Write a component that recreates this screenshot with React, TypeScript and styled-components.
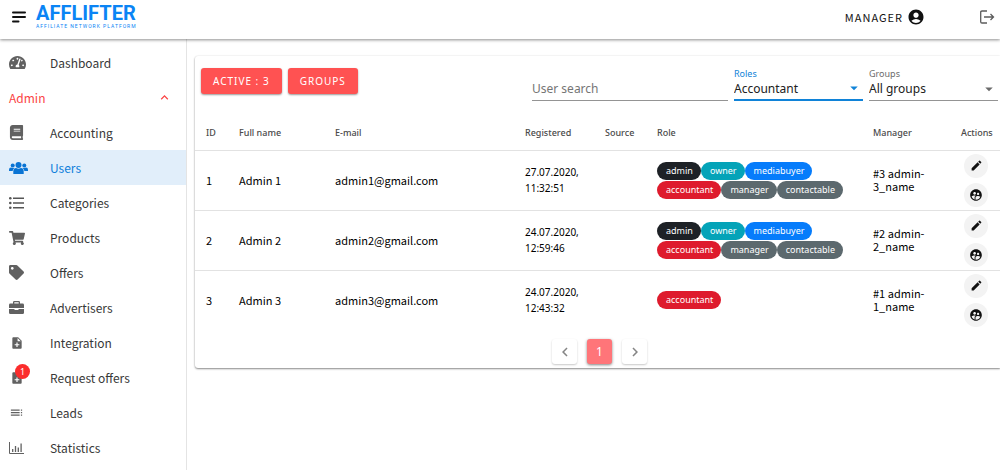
import React from 'react';
import styled, { createGlobalStyle, css } from 'styled-components';
import { FaBook, FaShoppingCart, FaTag, FaTachometerAlt } from 'react-icons/fa';
import {
  MdAccountCircle,
  MdArrowDropDown,
  MdChevronLeft,
  MdChevronRight,
  MdEdit,
  MdKeyboardArrowUp,
  MdNoteAdd,
  MdSupervisedUserCircle,
  MdToc,
} from 'react-icons/md';

const sans = "'Noto Sans', sans-serif";
const humanist = "'Noto Sans CJK SC', 'Noto Sans', sans-serif";

const GlobalStyle = createGlobalStyle`
  * { box-sizing: border-box; }
  body { margin: 0; background: #fff; font-family: ${sans}; color: #212121; }
  button, input, select { font: inherit; color: inherit; }
  svg { display: block; flex-shrink: 0; }
`;

const Page = styled.div`
  display: flex;
  flex-direction: column;
  min-height: 100vh;
`;

const TopBar = styled.header`
  display: flex;
  align-items: center;
  height: 39px;
  padding: 0 5px 6px 12px;
  background: #fff;
  box-shadow: 0 1px 3px rgba(0, 0, 0, 0.45);
  position: relative;
  z-index: 1;
`;

const PlainButton = styled.button`
  display: flex;
  align-items: center;
  padding: 0;
  border: 0;
  background: none;
  cursor: pointer;
`;

const Logo = styled.a`
  display: flex;
  flex-direction: column;
  margin-left: 10px;
  color: #0a84f5;
  text-decoration: none;
`;

const LogoName = styled.span`
  font: 700 20px/18px Roboto, sans-serif;
`;

const LogoTagline = styled.span`
  font: 400 5px/8px Roboto, sans-serif;
  letter-spacing: 1px;
`;

const Account = styled(PlainButton)`
  gap: 4px;
  margin: 0 54px 0 auto;
  color: #111;
  font: 11px/16px ${humanist};
  letter-spacing: 1px;
`;

const Body = styled.div`
  display: flex;
  flex: 1;
`;

const SideBar = styled.nav`
  flex: 0 0 187px;
  padding-top: 6px;
  border-right: 1px solid #e4e4e4;
`;

const itemStyles = css`
  display: flex;
  align-items: center;
  width: 100%;
  height: 35px;
  font: 12px/20px ${humanist};
`;

const MenuItem = styled.a<{ $active?: boolean }>`
  ${itemStyles}
  padding-left: 9px;
  color: ${(p) => (p.$active ? '#0d7fdb' : '#383838')};
  background: ${(p) => (p.$active ? '#e1eefa' : 'transparent')};
  text-decoration: none;
`;

const MenuIcon = styled.span<{ $active?: boolean }>`
  position: relative;
  display: flex;
  align-items: center;
  flex: 0 0 41px;
  color: ${(p) => (p.$active ? '#0a74d4' : '#616161')};
`;

const IconSlot = styled.span`
  display: flex;
  justify-content: center;
  min-width: 15px;
`;

const Badge = styled.span`
  position: absolute;
  left: 6px;
  top: -7px;
  width: 15px;
  height: 15px;
  border-radius: 50%;
  background: #fb2c2c;
  color: #fff;
  font: 9px/15px ${sans};
  text-align: center;
`;

const GroupToggle = styled.button`
  ${itemStyles}
  justify-content: space-between;
  padding: 0 14px 0 9px;
  border: 0;
  background: none;
  color: #fb4444;
  cursor: pointer;
`;

const Main = styled.main`
  flex: 1;
  min-width: 0;
  padding: 17px 0 0 8px;
`;

const Card = styled.section`
  padding-bottom: 4px;
  border-radius: 3px 0 0 3px;
  background: #fff;
  box-shadow: 0 1px 2px rgba(0, 0, 0, 0.45), 0 0 2px rgba(0, 0, 0, 0.08);
`;

const ToolBar = styled.div`
  display: flex;
  align-items: flex-start;
  gap: 6px;
  height: 59px;
  padding: 12px 2px 0 6px;
`;

const RedButton = styled.button`
  height: 26px;
  padding: 0 12px;
  border: 0;
  border-radius: 3px;
  background: #ff5252;
  box-shadow: 0 1px 2px rgba(0, 0, 0, 0.4);
  color: #fff;
  font-size: 10px;
  letter-spacing: 1px;
  cursor: pointer;
`;

const Field = styled.label<{ $width: number; $focused?: boolean; $first?: boolean }>`
  position: relative;
  display: flex;
  flex-direction: column;
  flex: 0 0 ${(p) => p.$width}px;
  margin-left: ${(p) => (p.$first ? 'auto' : '0')};
  height: 33px;
  border-bottom: ${(p) => (p.$focused ? '2px solid #1083d8' : '1px solid #949494')};
  color: ${(p) => (p.$focused ? '#1083d8' : '#6b6b6b')};
`;

const FieldLabel = styled.span`
  height: 11px;
  font-size: 9px;
  line-height: 11px;
`;

const control = css`
  width: 100%;
  height: 20px;
  padding: 0;
  border: 0;
  outline: 0;
  background: none;
  font-size: 12px;
  line-height: 20px;
`;

const SearchInput = styled.input`
  ${control}
  &::placeholder { color: #757575; opacity: 1; }
`;

const Select = styled.select`
  ${control}
  appearance: none;
  color: #212121;
`;

const Caret = styled(MdArrowDropDown)`
  position: absolute;
  right: 0;
  bottom: 2px;
  pointer-events: none;
`;

const Table = styled.table`
  width: 100%;
  table-layout: fixed;
  border-collapse: collapse;
`;

const HeadCell = styled.th<{ $width: number }>`
  width: ${(p) => p.$width}px;
  height: 35px;
  padding: 1px 0 0 11px;
  color: #4a4a4a;
  font-size: 9px;
  font-weight: 500;
  line-height: 12px;
  text-align: left;
`;

const Row = styled.tr`
  height: 60px;
  border-top: 1px solid #e2e2e2;
`;

const Cell = styled.td`
  padding: 0 0 0 11px;
  color: #000;
  font: 400 11px/13px ${humanist};
`;

const DateCell = styled(Cell)`
  font: 10px/16px ${sans};
`;

const Roles = styled.div`
  display: flex;
  flex-wrap: wrap;
  row-gap: 1px;
`;

const chipColors: Record<string, string> = {
  admin: '#1d2126',
  owner: '#04a3b8',
  mediabuyer: '#067cfb',
  accountant: '#de1b2d',
  manager: '#5c696e',
  contactable: '#5c696e',
};

const Chip = styled.span<{ $role: string }>`
  height: 18px;
  padding: 0 8px 0 9px;
  border-radius: 9px;
  background: ${(p) => chipColors[p.$role]};
  color: #fff;
  font: 9px/17px ${sans};
`;

const Actions = styled.div`
  display: flex;
  flex-direction: column;
  gap: 5px;
  padding-left: 3px;
`;

const RoundButton = styled.button`
  display: flex;
  align-items: center;
  justify-content: center;
  width: 24px;
  height: 24px;
  padding: 0;
  border: 0;
  border-radius: 50%;
  background: #f3f3f3;
  color: #111;
  cursor: pointer;
`;

const Pagination = styled.nav`
  display: flex;
  justify-content: center;
  gap: 10px;
  padding: 9px 0 0 4px;
`;

const PageButton = styled.button<{ $current?: boolean }>`
  display: flex;
  align-items: center;
  justify-content: center;
  width: 25px;
  height: 25px;
  padding: 0;
  border: 0;
  border-radius: 3px;
  background: ${(p) => (p.$current ? '#ff7579' : '#fff')};
  box-shadow: ${(p) => (p.$current ? '0 1px 3px rgba(0, 0, 0, 0.5)' : '0 1px 2px rgba(0, 0, 0, 0.22)')};
  color: ${(p) => (p.$current ? '#fff' : '#858585')};
  font-size: 12px;
  cursor: pointer;
`;

const MenuLines = () => (
  <svg width="14" height="12" viewBox="0 0 14 12" stroke="#111" strokeWidth="2" strokeLinecap="round">
    <path d="M1 1.500h12M1 6h12M1 10.500h5.500" />
  </svg>
);

const ExitIcon = () => (
  <svg width="16" height="14" viewBox="0 0 16 14" fill="none" stroke="#5c5c5c" strokeWidth="1.300">
    <path d="M8 1H3Q1.700 1 1.700 2.300v9.400Q1.700 13 3 13h5M5 7h9.500M11.500 4l3 3-3 3" />
  </svg>
);

const PeopleIcon = () => (
  <svg width="19" height="12" viewBox="0 0 19 12" fill="currentColor">
    <circle cx="9.500" cy="3" r="3" />
    <circle cx="3.700" cy="3.600" r="2" />
    <circle cx="15.300" cy="3.600" r="2" />
    <path d="M4.300 12V9.600Q4.300 6.200 7.100 6q2.400 1.500 4.800 0 2.800.2 2.800 3.600V12z" />
    <path d="M0 9V7.800Q0 5.700 2 5.600q1.500.8 3 .1L5.500 6Q3.900 7 3.600 9zM19 9V7.800q0-2.100-2-2.200-1.500.8-3 .1l-.5.3q1.600 1 1.900 3z" />
  </svg>
);

const ListIcon = () => (
  <svg width="15" height="12" viewBox="0 0 15 12" fill="#555">
    <circle cx="1.300" cy="1.300" r="1.300" />
    <circle cx="1.300" cy="6" r="1.300" />
    <circle cx="1.300" cy="10.700" r="1.300" />
    <path d="M4 .6h11v1.400H4zM4 5.300h11v1.400H4zM4 10h11v1.400H4z" />
  </svg>
);

const BriefcaseIcon = () => (
  <svg width="15" height="13" viewBox="0 0 15 13" fill="currentColor">
    <path
      fillRule="evenodd"
      d="M4 2.500V1.200Q4 0 5.200 0h4.600Q11 0 11 1.200v1.300h2.600q1.400 0 1.400 1.400V7H0V3.900q0-1.400 1.400-1.400zM5.300 2.500h4.400V1.300H5.300z"
    />
    <path d="M0 8h5.500v1h4V8H15v3.700q0 1.300-1.400 1.300H1.400Q0 13 0 11.700z" />
  </svg>
);

const ChartIcon = () => (
  <svg width="15" height="12" viewBox="0 0 15 12" fill="none" stroke="currentColor">
    <path d="M.5 0v11.500H15" />
    <path strokeWidth="1.300" d="M3.700 10V7M6.500 10V4M9.300 10V5.500M12.100 10V1.500" />
  </svg>
);

const menu = [
  { label: 'Accounting', icon: <FaBook size={15} /> },
  { label: 'Users', icon: <PeopleIcon />, active: true },
  { label: 'Categories', icon: <ListIcon /> },
  { label: 'Products', icon: <FaShoppingCart size={16} /> },
  { label: 'Offers', icon: <FaTag size={15} /> },
  { label: 'Advertisers', icon: <BriefcaseIcon /> },
  { label: 'Integration', icon: <MdNoteAdd size={14} /> },
  { label: 'Request offers', icon: <MdNoteAdd size={14} />, badge: 1 },
  { label: 'Leads', icon: <MdToc size={15} /> },
  { label: 'Statistics', icon: <ChartIcon /> },
];

const columns: [string, number][] = [
  ['ID', 33],
  ['Full name', 96],
  ['E-mail', 190],
  ['Registered', 80],
  ['Source', 52],
  ['Role', 216],
  ['Manager', 88],
  ['Actions', 50],
];

const allRoles = ['admin', 'owner', 'mediabuyer', 'accountant', 'manager', 'contactable'];

const users = [
  { id: 1, date: '27.07.2020, 11:32:51', roles: allRoles, manager: 3 },
  { id: 2, date: '24.07.2020, 12:59:46', roles: allRoles, manager: 2 },
  { id: 3, date: '24.07.2020, 12:43:32', roles: ['accountant'], manager: 1 },
];

export default function App() {
  return (
    <Page>
      <GlobalStyle />
      <TopBar>
        <PlainButton aria-label="Menu">
          <MenuLines />
        </PlainButton>
        <Logo href="#">
          <LogoName>AFFLIFTER</LogoName>
          <LogoTagline>AFFILIATE NETWORK PLATFORM</LogoTagline>
        </Logo>
        <Account>
          MANAGER
          <MdAccountCircle size={18} />
        </Account>
        <PlainButton aria-label="Log out">
          <ExitIcon />
        </PlainButton>
      </TopBar>
      <Body>
        <SideBar>
          <MenuItem href="#">
            <MenuIcon>
              <FaTachometerAlt size={17} />
            </MenuIcon>
            Dashboard
          </MenuItem>
          <GroupToggle aria-expanded="true">
            Admin
            <MdKeyboardArrowUp size={15} />
          </GroupToggle>
          {menu.map((m) => (
            <MenuItem key={m.label} href="#" $active={m.active}>
              <MenuIcon $active={m.active}>
                <IconSlot>{m.icon}</IconSlot>
                {m.badge && <Badge>{m.badge}</Badge>}
              </MenuIcon>
              {m.label}
            </MenuItem>
          ))}
        </SideBar>
        <Main>
          <Card>
            <ToolBar>
              <RedButton>ACTIVE : 3</RedButton>
              <RedButton>GROUPS</RedButton>
              <Field $width={196} $first>
                <FieldLabel />
                <SearchInput placeholder="User search" aria-label="User search" />
              </Field>
              <Field $width={129} $focused>
                <FieldLabel>Roles</FieldLabel>
                <Select defaultValue="Accountant">
                  <option>Accountant</option>
                </Select>
                <Caret size={18} />
              </Field>
              <Field $width={129}>
                <FieldLabel>Groups</FieldLabel>
                <Select defaultValue="All groups">
                  <option>All groups</option>
                </Select>
                <Caret size={18} />
              </Field>
            </ToolBar>
            <Table>
              <thead>
                <tr>
                  {columns.map(([name, width]) => (
                    <HeadCell key={name} $width={width}>
                      {name}
                    </HeadCell>
                  ))}
                </tr>
              </thead>
              <tbody>
                {users.map((u) => (
                  <Row key={u.id}>
                    <Cell>{u.id}</Cell>
                    <Cell>Admin {u.id}</Cell>
                    <Cell>admin{u.id}@gmail.com</Cell>
                    <DateCell>{u.date}</DateCell>
                    <Cell />
                    <Cell>
                      <Roles>
                        {u.roles.map((r) => (
                          <Chip key={r} $role={r}>
                            {r}
                          </Chip>
                        ))}
                      </Roles>
                    </Cell>
                    <Cell>
                      #{u.manager} admin-
                      <br />
                      {u.manager}_name
                    </Cell>
                    <Cell>
                      <Actions>
                        <RoundButton aria-label="Edit">
                          <MdEdit size={13} />
                        </RoundButton>
                        <RoundButton aria-label="View as user">
                          <MdSupervisedUserCircle size={14} />
                        </RoundButton>
                      </Actions>
                    </Cell>
                  </Row>
                ))}
              </tbody>
            </Table>
            <Pagination aria-label="Pages">
              <PageButton aria-label="Previous page">
                <MdChevronLeft size={18} />
              </PageButton>
              <PageButton $current>1</PageButton>
              <PageButton aria-label="Next page">
                <MdChevronRight size={18} />
              </PageButton>
            </Pagination>
          </Card>
        </Main>
      </Body>
    </Page>
  );
}
